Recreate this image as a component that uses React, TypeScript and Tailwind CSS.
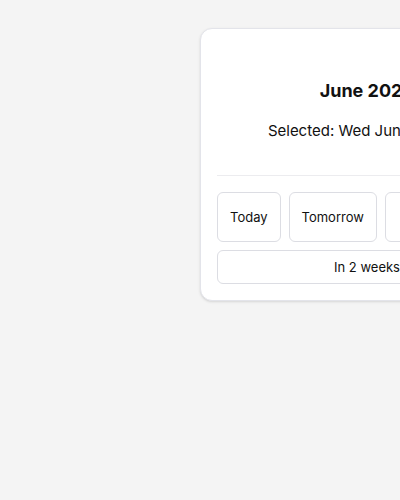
import { useState } from "react";

// Quick date picker card: month heading, selected date, and preset shortcuts.

const presets = ["Today", "Tomorrow"];

export default function App() {
  const [selected, setSelected] = useState("Wed Jun 12, 2024");

  return (
    <div className="h-[500px] w-[400px] overflow-hidden bg-[#f4f4f4] font-['Inter',sans-serif] text-[#111]">
      <div className="ml-[200px] mt-[28px] w-[334px] rounded-xl border border-[#e3e4ea] bg-white px-4 pb-4 pt-12 shadow-sm">
        <h2 className="text-center text-lg font-bold leading-7">June 2024</h2>
        <p className="mt-[14px] text-center text-[15px] leading-6">Selected: {selected}</p>
        <div className="mt-8 border-t border-[#ececef] pt-4">
          <div className="flex gap-2">
            {presets.map((p) => (
              <button
                key={p}
                onClick={() => setSelected(p)}
                className="shrink-0 rounded-md border border-[#dcdde3] bg-white px-3 py-3.5 text-[13px] leading-5"
              >
                {p}
              </button>
            ))}
            <button
              onClick={() => setSelected("Next week")}
              className="flex-1 rounded-md border border-[#dcdde3] bg-white px-3 py-3.5 text-[13px] leading-5"
            >
              Next week
            </button>
          </div>
          <button
            onClick={() => setSelected("In 2 weeks")}
            className="mt-2 w-full rounded-md border border-[#dcdde3] bg-white px-3 py-1.5 text-[13px] leading-5"
          >
            In 2 weeks
          </button>
        </div>
      </div>
    </div>
  );
}
